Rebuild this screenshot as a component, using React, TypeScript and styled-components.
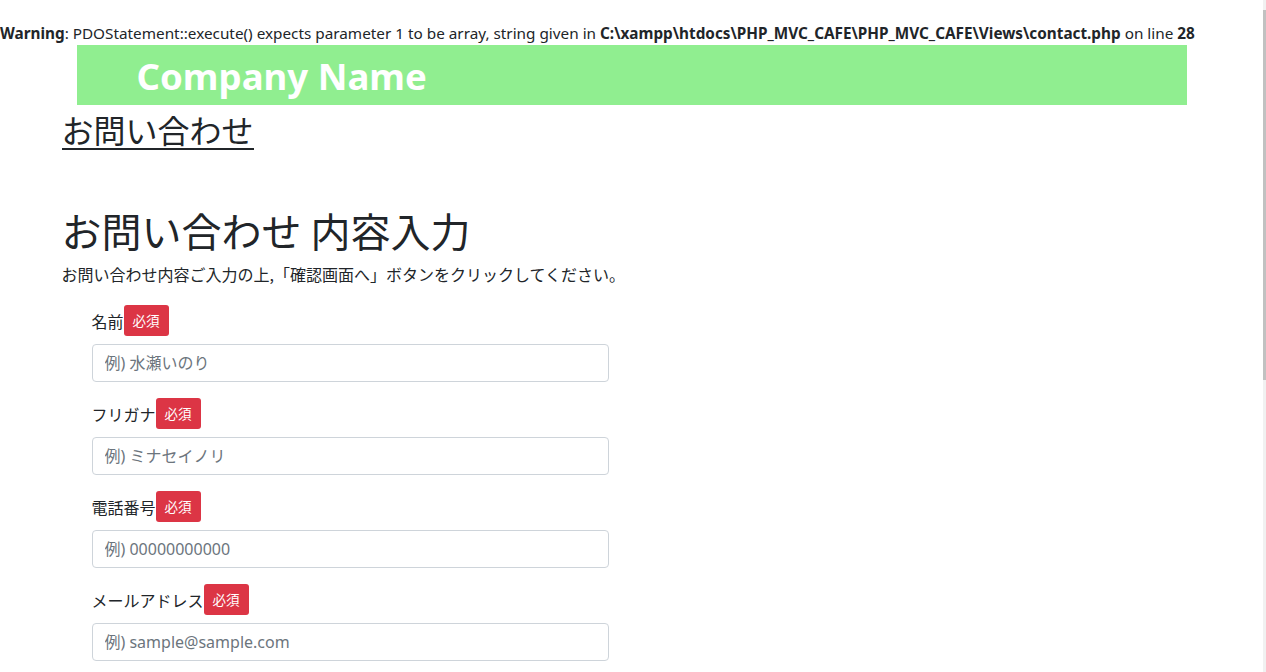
import * as React from 'react'
import styled, {createGlobalStyle} from 'styled-components'

const GlobalStyle = createGlobalStyle`
  html, body {
    margin: 0;
    padding: 0;
    overflow: hidden;
    background: #fff;
  }
  body {
    font-family: "Noto Sans", "Noto Sans CJK JP", sans-serif;
    font-size: 16px;
    line-height: 1.5;
    color: #212529;
  }
`

const Shell = styled.div`
  display: flex;
  height: 672px;
`

const Page = styled.div`
  flex: 1;
  min-width: 0;
`

// thin always-visible scrollbar on the right edge
const ScrollTrack = styled.div`
  width: 3px;
  background: #f1f1f1;
  padding-top: 10px;
  box-sizing: border-box;
  .thumb {
    height: 370px;
    background: #c1c1c1;
  }
`

const Warning = styled.div`
  margin-top: 21px;
  height: 24px;
  line-height: 24px;
  white-space: nowrap;
  font-size: 15.3px;
  b {
    font-weight: 700;
  }
`

const Container = styled.div`
  max-width: 1140px;
  margin: 0 auto;
`

const Header = styled.header`
  margin: 0 15px;
  height: 60px;
  box-sizing: border-box;
  padding: 4px 0 0 60px;
  background: #90ee90;
  display: flex;
  align-items: center;
  h1 {
    margin: 0;
    color: #fff;
    font-size: 36.6px;
    font-weight: 700;
    line-height: 1.2;
  }
`

const PageTitle = styled.h2`
  display: inline-block;
  margin: 5px 0 0;
  font-size: 32px;
  font-weight: 400;
  line-height: 1.2;
  border-bottom: 2px solid #212529;
  font-family: "Noto Sans CJK JP", sans-serif;
`

const FormTitle = styled.h1`
  margin: 56px 0 8px;
  font-size: 40px;
  font-weight: 400;
  line-height: 1.2;
  font-family: "Noto Sans CJK JP", sans-serif;
`

const Lead = styled.p`
  margin: 0;
  font-size: 16px;
  line-height: 24px;
  font-family: "Noto Sans CJK JP", sans-serif;
`

const Form = styled.form`
  margin: 19px 0 0 30px;
  width: 517px;
`

const Group = styled.div`
  margin-bottom: 16px;
`

const LabelRow = styled.label`
  display: flex;
  align-items: center;
  height: 31px;
  margin-bottom: 8px;
  font-family: "Noto Sans CJK JP", sans-serif;
`

const Badge = styled.span`
  display: inline-block;
  background: #dc3545;
  color: #fff;
  font-size: 13.5px;
  line-height: 31px;
  padding: 0 9px;
  border-radius: 3px;
  font-family: "Noto Sans CJK JP", sans-serif;
`

const Input = styled.input`
  display: block;
  width: 100%;
  height: 38px;
  box-sizing: border-box;
  padding: 6px 12px;
  border: 1px solid #ced4da;
  border-radius: 4px;
  font-size: 16px;
  font-family: "Noto Sans", "Noto Sans CJK JP", sans-serif;
  color: #495057;
  &::placeholder {
    color: #6c757d;
  }
`

const fields = [
  {label: '名前', placeholder: '例) 水瀬いのり', type: 'text'},
  {label: 'フリガナ', placeholder: '例) ミナセイノリ', type: 'text'},
  {label: '電話番号', placeholder: '例) 00000000000', type: 'tel'},
  {label: 'メールアドレス', placeholder: '例) sample@sample.com', type: 'email'},
]

export default function App() {
  return (
    <Shell>
      <GlobalStyle/>
      <Page>
        <Warning>
          <b>Warning</b>: PDOStatement::execute() expects parameter 1 to be array, string given in{' '}
          <b>C:\xampp\htdocs\PHP_MVC_CAFE\PHP_MVC_CAFE\Views\contact.php</b> on line <b>28</b>
        </Warning>
        <Container>
          <Header>
            <h1>Company Name</h1>
          </Header>
          <PageTitle>お問い合わせ</PageTitle>
          <FormTitle>お問い合わせ 内容入力</FormTitle>
          <Lead>お問い合わせ内容ご入力の上,「確認画面へ」ボタンをクリックしてください。</Lead>
          <Form>
            {fields.map(f => (
              <Group key={f.label}>
                <LabelRow>
                  {f.label}
                  <Badge>必須</Badge>
                </LabelRow>
                <Input type={f.type} placeholder={f.placeholder}/>
              </Group>
            ))}
          </Form>
        </Container>
      </Page>
      <ScrollTrack>
        <div className='thumb'/>
      </ScrollTrack>
    </Shell>
  )
}
